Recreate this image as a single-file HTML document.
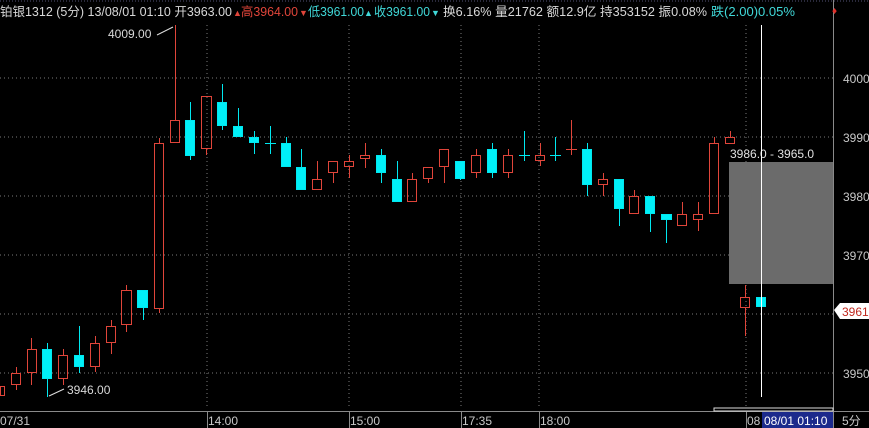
<!DOCTYPE html>
<html><head><meta charset="utf-8"><style>
html,body{margin:0;padding:0;background:#000;width:869px;height:428px;overflow:hidden}
svg{display:block}
text{font-family:"Liberation Sans","Noto Sans CJK SC",sans-serif}
</style></head><body>
<svg width="869" height="428" xmlns="http://www.w3.org/2000/svg">
<rect width="869" height="428" fill="#000"/>
<line x1="0" y1="1" x2="869" y2="1" stroke="#555577" stroke-dasharray="1,2"/>
<g stroke="#7a7a7a" stroke-dasharray="1,3">
<line x1="0" y1="78" x2="833" y2="78"/><line x1="0" y1="137" x2="833" y2="137"/>
<line x1="0" y1="196" x2="833" y2="196"/><line x1="0" y1="255" x2="833" y2="255"/>
<line x1="0" y1="314" x2="833" y2="314"/><line x1="0" y1="373" x2="833" y2="373"/>
<line x1="207" y1="25" x2="207" y2="408"/><line x1="349" y1="25" x2="349" y2="408"/>
<line x1="461" y1="25" x2="461" y2="408"/><line x1="539" y1="25" x2="539" y2="408"/>
<line x1="746" y1="25" x2="746" y2="408"/>
</g>
<rect x="729" y="162" width="104" height="122" fill="#6b6b6b"/>
<text x="730" y="158" fill="#e0e0e0" font-size="12">3986.0 - 3965.0</text>
<line x1="833.5" y1="0" x2="833.5" y2="428" stroke="#8a8a8a"/>
<line x1="0" y1="411.5" x2="869" y2="411.5" stroke="#8a8a8a"/>
<rect x="714" y="408" width="119" height="3" fill="none" stroke="#ddd"/>
<g stroke="#e0453a" fill="none" stroke-width="1">
<path d="M0.5 386.5h4v9h-4z"/>
<path d="M16.5 367v6M16.5 385v5"/><rect x="11.5" y="373.5" width="9" height="11"/>
<path d="M31.5 338v11M31.5 373v12"/><rect x="27.5" y="349.5" width="9" height="23"/>
<path d="M63.5 349v6M63.5 379v6"/><rect x="58.5" y="355.5" width="9" height="23"/>
<path d="M95.5 336v7M95.5 366v6"/><rect x="90.5" y="343.5" width="9" height="23"/>
<path d="M111.5 320v6M111.5 342v12"/><rect x="106.5" y="326.5" width="9" height="16"/>
<path d="M126.5 285v5M126.5 324v8"/><rect x="121.5" y="290.5" width="10" height="34"/>
<path d="M159.5 138v5M159.5 308v5"/><rect x="154.5" y="143.5" width="9" height="165"/>
<path d="M175.5 25v95"/><rect x="170.5" y="120.5" width="9" height="22"/>
<path d="M206.5 148v7"/><rect x="201.5" y="96.5" width="10" height="52"/>
<path d="M317.5 161v18M317.5 189v1"/><rect x="312.5" y="179.5" width="9" height="10"/>
<path d="M333.5 172v11"/><rect x="328.5" y="161.5" width="9" height="11"/>
<path d="M349.5 155v6M349.5 166v12"/><rect x="344.5" y="161.5" width="9" height="5"/>
<path d="M365.5 143v12M365.5 158v10"/><rect x="360.5" y="155.5" width="9" height="3"/>
<path d="M412.5 173v6"/><rect x="407.5" y="179.5" width="9" height="22"/>
<path d="M428.5 178v5"/><rect x="423.5" y="167.5" width="9" height="11"/>
<path d="M444.5 166v17"/><rect x="439.5" y="149.5" width="9" height="17"/>
<path d="M476.5 149v6M476.5 172v6"/><rect x="471.5" y="155.5" width="9" height="17"/>
<path d="M508.5 149v6M508.5 172v6"/><rect x="503.5" y="155.5" width="9" height="17"/>
<path d="M540.5 143v12M540.5 160v6"/><rect x="535.5" y="155.5" width="9" height="5"/>
<path d="M571.5 120v35M566 149.5h11"/>
<path d="M603.5 173v6M603.5 184v12"/><rect x="598.5" y="179.5" width="9" height="5"/>
<path d="M634.5 190v6"/><rect x="629.5" y="196.5" width="9" height="17"/>
<path d="M682.5 202v12"/><rect x="677.5" y="214.5" width="9" height="11"/>
<path d="M698.5 202v12M698.5 219v12"/><rect x="693.5" y="214.5" width="9" height="5"/>
<path d="M714.5 137v6"/><rect x="709.5" y="143.5" width="9" height="70"/>
<path d="M730.5 131v6"/><rect x="725.5" y="137.5" width="9" height="6"/>
<path d="M745.5 285v12M745.5 307v29"/><rect x="740.5" y="297.5" width="9" height="10"/>
</g>
<g stroke="#00e8f0" fill="#00f0f8">
<path d="M47.5 343v54" /><rect x="42.5" y="349.5" width="9" height="29"/>
<path d="M79.5 326v47"/><rect x="74.5" y="355.5" width="9" height="11"/>
<path d="M143.5 307v13"/><rect x="137.5" y="290.5" width="10" height="17"/>
<path d="M190.5 102v58"/><rect x="185.5" y="120.5" width="9" height="35"/>
<path d="M222.5 84v46"/><rect x="217.5" y="102.5" width="9" height="23"/>
<path d="M238.5 108v29"/><rect x="233.5" y="126.5" width="9" height="10"/>
<path d="M254.5 131v23"/><rect x="249.5" y="137.5" width="9" height="5"/>
<path d="M270.5 126v28M265 143.5h11"/>
<path d="M286.5 137v29"/><rect x="281.5" y="143.5" width="9" height="23"/>
<path d="M301.5 149v41"/><rect x="296.5" y="167.5" width="9" height="22"/>
<path d="M381.5 149v34"/><rect x="376.5" y="155.5" width="9" height="17"/>
<path d="M397.5 161v40"/><rect x="392.5" y="179.5" width="9" height="22"/>
<path d="M460.5 161v19"/><rect x="455.5" y="161.5" width="9" height="17"/>
<path d="M492.5 143v35"/><rect x="487.5" y="149.5" width="9" height="23"/>
<path d="M524.5 131v30M519 155.5h11"/>
<path d="M555.5 137v24M550 155.5h11"/>
<path d="M587.5 143v53"/><rect x="582.5" y="149.5" width="9" height="35"/>
<path d="M619.5 179v47"/><rect x="614.5" y="179.5" width="9" height="29"/>
<path d="M650.5 196v36"/><rect x="645.5" y="196.5" width="9" height="17"/>
<path d="M666.5 214v29"/><rect x="661.5" y="214.5" width="10" height="5"/>
<rect x="756.5" y="297.5" width="9" height="9"/>
</g>
<line x1="761.5" y1="25" x2="761.5" y2="397" stroke="#fff"/>
<line x1="157" y1="35" x2="173" y2="27" stroke="#ddd"/>
<text x="108" y="38" fill="#d8d8d8" font-size="12">4009.00</text>
<line x1="49" y1="396" x2="64" y2="389" stroke="#ddd"/>
<text x="67" y="394" fill="#d8d8d8" font-size="12">3946.00</text>
<g fill="#c8c8c8" font-size="12">
<text x="843" y="83">4000</text><text x="843" y="142">3990</text>
<text x="843" y="201">3980</text><text x="843" y="260">3970</text>
<text x="843" y="378">3950</text>
<text x="0" y="425">07/31</text><text x="208" y="425">14:00</text>
<text x="350" y="425">15:00</text><text x="462" y="425">17:35</text>
<text x="540" y="425">18:00</text><text x="747" y="425">08</text>
<text x="842" y="425">5分</text>
</g>
<line x1="207.5" y1="412" x2="207.5" y2="428" stroke="#8a8a8a"/>
<line x1="349.5" y1="412" x2="349.5" y2="428" stroke="#8a8a8a"/>
<line x1="461.5" y1="412" x2="461.5" y2="428" stroke="#8a8a8a"/>
<line x1="539.5" y1="412" x2="539.5" y2="428" stroke="#8a8a8a"/>
<line x1="746.5" y1="412" x2="746.5" y2="428" stroke="#8a8a8a"/>
<rect x="762" y="412" width="71" height="16" fill="#1c2a8c"/>
<text x="764" y="425" fill="#fff" font-size="12">08/01 01:10</text>
<path d="M834 310l6-7h29v16h-29z" fill="#fff"/>
<text x="842" y="316" fill="#c0281e" font-size="12">3961</text>
<g font-size="12.5">
<text x="0" y="16" fill="#d8d8d8" textLength="232" lengthAdjust="spacingAndGlyphs">铂银1312 (5分) 13/08/01 01:10 开3963.00</text>
<text x="233" y="16" fill="#e0453a" font-size="9">▲</text>
<text x="241" y="16" fill="#e0453a" textLength="57" lengthAdjust="spacingAndGlyphs">高3964.00</text>
<text x="299" y="16" fill="#e0453a" font-size="9">▼</text>
<text x="308" y="16" fill="#40d8d8" textLength="56" lengthAdjust="spacingAndGlyphs">低3961.00</text>
<text x="364" y="16" fill="#40d8d8" font-size="9">▲</text>
<text x="374" y="16" fill="#40d8d8" textLength="56" lengthAdjust="spacingAndGlyphs">收3961.00</text>
<text x="431" y="16" fill="#40d8d8" font-size="9">▼</text>
<text x="443" y="16" fill="#d8d8d8" textLength="264" lengthAdjust="spacingAndGlyphs">换6.16% 量21762 额12.9亿 持353152 振0.08%</text>
<text x="711" y="16" fill="#40d8d8" textLength="84" lengthAdjust="spacingAndGlyphs">跌(2.00)0.05%</text>
</g>
<text x="832" y="14" fill="#e0302a" font-size="10">♦</text>
</svg>
</body></html>
